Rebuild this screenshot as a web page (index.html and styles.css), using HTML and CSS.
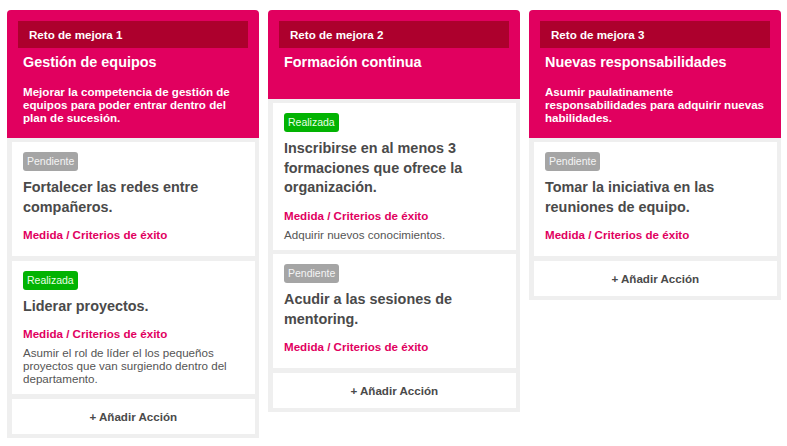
FILE: index.html
```html
<!DOCTYPE html>
<html lang="es">
<head>
<meta charset="utf-8">
<title>Retos de mejora</title>
<link rel="stylesheet" href="styles.css">
</head>
<body>
<div class="board">
  <section class="column">
    <header class="col-head">
      <div class="col-tag">Reto de mejora 1</div>
      <h2 class="col-title">Gestión de equipos</h2>
      <p class="col-desc">Mejorar la competencia de gestión de equipos para poder entrar dentro del plan de sucesión.</p>
    </header>
    <div class="col-body">
      <article class="card">
        <span class="badge badge-pending">Pendiente</span>
        <h3 class="card-title">Fortalecer las redes entre compañeros.</h3>
        <div class="card-label">Medida / Criterios de éxito</div>
        <p class="card-desc"></p>
      </article>
      <article class="card">
        <span class="badge badge-done">Realizada</span>
        <h3 class="card-title">Liderar proyectos.</h3>
        <div class="card-label">Medida / Criterios de éxito</div>
        <p class="card-desc">Asumir el rol de líder el los pequeños proyectos que van surgiendo dentro del departamento.</p>
      </article>
      <button class="add-btn" type="button">+ Añadir Acción</button>
    </div>
  </section>

  <section class="column">
    <header class="col-head">
      <div class="col-tag">Reto de mejora 2</div>
      <h2 class="col-title">Formación continua</h2>
      <p class="col-desc"></p>
    </header>
    <div class="col-body">
      <article class="card">
        <span class="badge badge-done">Realizada</span>
        <h3 class="card-title">Inscribirse en al menos 3 formaciones que ofrece la organización.</h3>
        <div class="card-label">Medida / Criterios de éxito</div>
        <p class="card-desc">Adquirir nuevos conocimientos.</p>
      </article>
      <article class="card">
        <span class="badge badge-pending">Pendiente</span>
        <h3 class="card-title">Acudir a las sesiones de mentoring.</h3>
        <div class="card-label">Medida / Criterios de éxito</div>
        <p class="card-desc"></p>
      </article>
      <button class="add-btn" type="button">+ Añadir Acción</button>
    </div>
  </section>

  <section class="column">
    <header class="col-head">
      <div class="col-tag">Reto de mejora 3</div>
      <h2 class="col-title">Nuevas responsabilidades</h2>
      <p class="col-desc">Asumir paulatinamente responsabilidades para adquirir nuevas habilidades.</p>
    </header>
    <div class="col-body">
      <article class="card">
        <span class="badge badge-pending">Pendiente</span>
        <h3 class="card-title">Tomar la iniciativa en las reuniones de equipo.</h3>
        <div class="card-label">Medida / Criterios de éxito</div>
        <p class="card-desc"></p>
      </article>
      <button class="add-btn" type="button">+ Añadir Acción</button>
    </div>
  </section>
</div>
</body>
</html>
```

FILE: styles.css
```css
* { box-sizing: border-box; }

html, body {
  margin: 0;
  padding: 0;
  background: #ffffff;
  font-family: "Liberation Sans", Arial, sans-serif;
}

.board {
  display: flex;
  align-items: flex-start;
  gap: 9px;
  padding: 10px 0 0 7px;
}

.column {
  width: 252px;
  flex: 0 0 252px;
  background: #efefef;
  border-radius: 4px 4px 0 0;
  overflow: hidden;
}

.col-head {
  background: #e1005f;
  color: #ffffff;
  padding: 11px 11px 14.5px;
}

.col-tag {
  background: #ad002d;
  height: 27px;
  line-height: 27px;
  padding-left: 11px;
  font-size: 11.6px;
  font-weight: bold;
}

.col-title {
  margin: 5.25px 0 0;
  padding: 0 3px 0 5px;
  font-size: 14.4px;
  line-height: 19.5px;
  font-weight: bold;
}

.col-desc {
  margin: 11.75px 0 0;
  padding: 0 3px 0 5px;
  font-size: 11.6px;
  line-height: 13px;
  font-weight: bold;
}

.col-body {
  display: flex;
  flex-direction: column;
  gap: 4.5px;
  padding: 4px 4.5px 4.5px 5px;
}

.card {
  background: #ffffff;
  padding: 9px 11px 9px;
}

.badge {
  display: inline-block;
  height: 19px;
  line-height: 19px;
  padding: 0 4px;
  border-radius: 3px;
  font-size: 10.5px;
}

.badge-pending {
  background: #a5a5a5;
  color: #f4f4f4;
}

.badge-done {
  background: #02b302;
  color: #e6ffe6;
}

.card-title {
  margin: 7px 0 0;
  font-size: 14.4px;
  line-height: 19.5px;
  font-weight: bold;
  color: #4a4a4a;
}

.card-label {
  margin-top: 10px;
  font-size: 11.6px;
  line-height: 16px;
  font-weight: bold;
  color: #e1005f;
}

.card-desc {
  margin: 4px 0 0;
  font-size: 11.6px;
  line-height: 13px;
  color: #555555;
}

.add-btn {
  display: block;
  width: 100%;
  height: 35px;
  border: 0;
  background: #ffffff;
  font-family: inherit;
  font-size: 11.6px;
  font-weight: bold;
  color: #4a4a4a;
  text-align: center;
  padding: 0;
  cursor: pointer;
}
```
